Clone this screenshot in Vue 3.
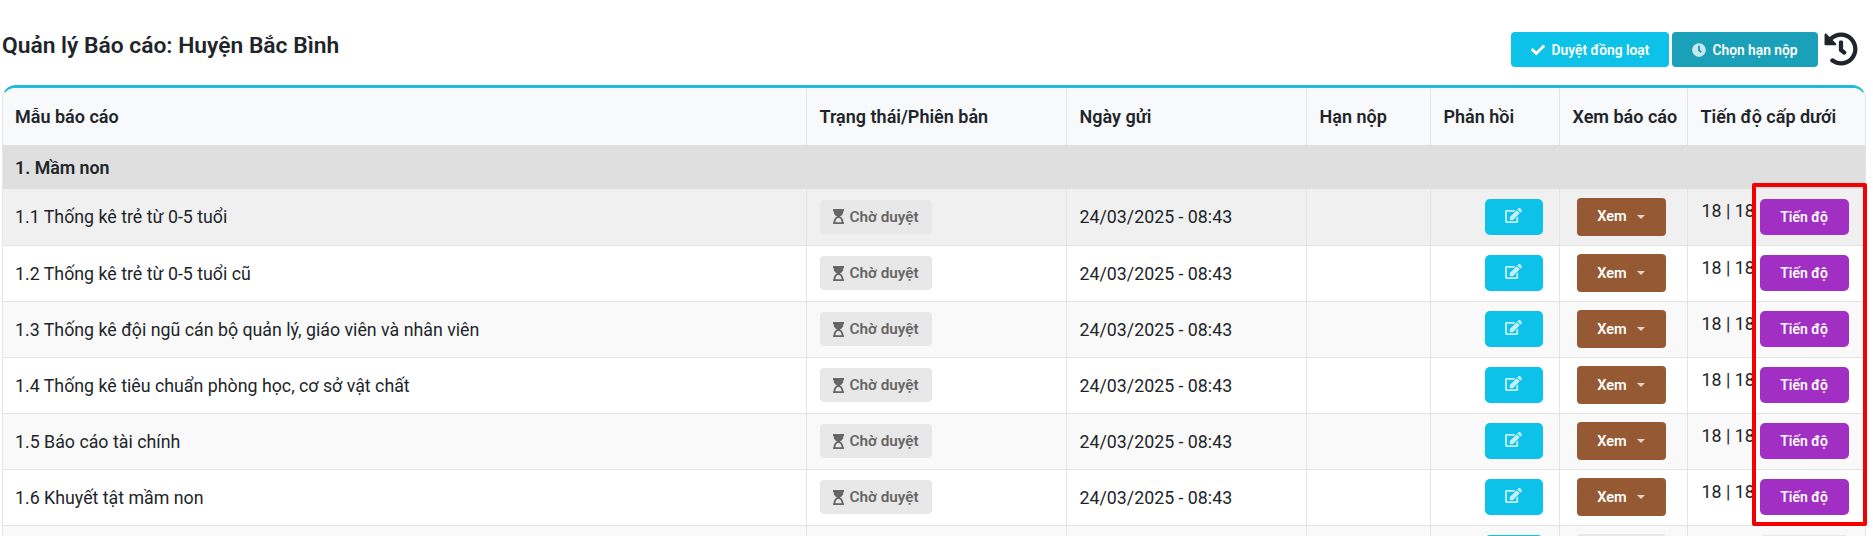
<template>
  <div class="page">
    <div class="top-bar">
      <h2 class="page-title">Quản lý Báo cáo: Huyện Bắc Bình</h2>
      <div class="top-actions">
        <button class="btn btn-approve">
          <svg class="btn-icon check" viewBox="0 0 512 512"><path fill="currentColor" d="M173.9 439.4 7.5 273c-10-10-10-26.200 0-36.200l36.200-36.200c10-10 26.200-10 36.200 0L192 312.700 432.100 72.600c10-10 26.200-10 36.200 0l36.200 36.200c10 10 10 26.200 0 36.200L210.100 439.400c-10 10-26.200 10-36.200 0z"/></svg>
          Duyệt đồng loạt
        </button>
        <button class="btn btn-deadline">
          <svg class="btn-icon clock" viewBox="0 0 512 512"><path fill="currentColor" d="M256 8C119 8 8 119 8 256s111 248 248 248 248-111 248-248S393 8 256 8zm57 350-88-64c-3-2-5-6-5-10V116c0-7 5-12 12-12h48c7 0 12 5 12 12v138l63 46c5 4 7 11 3 17l-28 39c-4 5-11 6-17 2z"/></svg>
          Chọn hạn nộp
        </button>
        <svg class="history" viewBox="0 0 512 512"><path fill="currentColor" d="M504 255.531c.253 136.640-111.180 248.372-247.820 248.468-59.015.042-113.223-20.530-155.822-54.911-11.077-8.940-11.905-25.541-1.839-35.607l11.267-11.267c8.609-8.609 22.353-9.551 31.891-1.984C173.062 425.135 212.781 440 256 440c101.705 0 184-82.311 184-184 0-101.705-82.311-184-184-184-48.814 0-93.149 18.969-126.068 49.932l50.754 50.754c10.080 10.080 2.941 27.314-11.313 27.314H24c-8.837 0-16-7.163-16-16V38.627c0-14.254 17.234-21.393 27.314-11.314l49.372 49.372C129.209 34.136 189.552 8 256 8c136.810 0 247.747 110.780 248 247.531zm-180.912 78.784l9.823-12.630c8.138-10.463 6.253-25.542-4.210-33.679L288 256.349V152c0-13.255-10.745-24-24-24h-16c-13.255 0-24 10.745-24 24v135.651l65.409 50.874c10.463 8.137 25.541 6.253 33.679-4.210z"/></svg>
      </div>
    </div>

    <div class="table-card">
      <table class="report-table">
        <colgroup>
          <col v-for="w in colWidths" :key="w.name" :style="{ width: w.px + 'px' }" />
        </colgroup>
        <thead>
          <tr>
            <th v-for="w in colWidths" :key="w.name">{{ w.name }}</th>
          </tr>
        </thead>
        <tbody>
          <tr class="group-row">
            <td colspan="7">1. Mầm non</td>
          </tr>
          <tr v-for="(r, i) in rows" :key="r" :class="['data-row', rowClass(i)]">
            <td>{{ r }}</td>
            <td>
              <span class="badge">
                <svg class="hourglass" viewBox="0 0 384 512"><path fill="currentColor" d="M360 0H24C11 0 0 11 0 24v16c0 13 11 24 24 24 0 91 51 167 121 192-70 25-121 101-121 192-13 0-24 11-24 24v16c0 13 11 24 24 24h336c13 0 24-11 24-24v-16c0-13-11-24-24-24 0-91-51-167-121-192 70-25 121-101 121-192 13 0 24-11 24-24V24c0-13-11-24-24-24zM296 448H88c0-30 6-58 18-82 20-39 51-62 86-62s66 23 86 62c12 24 18 52 18 82z"/></svg>
                Chờ duyệt
              </span>
            </td>
            <td>24/03/2025 - 08:43</td>
            <td></td>
            <td class="cell-edit">
              <button class="btn-edit">
                <svg viewBox="0 0 576 512"><path fill="currentColor" d="m402.600 83.200 90.200 90.200c3.800 3.800 3.800 10 0 13.800L274.400 405.600l-92.800 10.300c-12.400 1.400-22.900-9.100-21.500-21.500l10.300-92.800L388.800 83.200c3.800-3.800 10-3.800 13.800 0zm162-22.900-48.800-48.800c-15.200-15.200-39.900-15.200-55.200 0l-35.400 35.400c-3.800 3.800-3.800 10 0 13.800l90.200 90.200c3.800 3.800 10 3.800 13.800 0l35.400-35.400c15.200-15.300 15.200-40 0-55.200zM384 346.200V448H64V128h229.800c3.200 0 6.200-1.300 8.500-3.500l40-40c7.600-7.600 2.200-20.500-8.500-20.500H48C21.500 64 0 85.500 0 112v352c0 26.500 21.500 48 48 48h352c26.500 0 48-21.500 48-48V306.200c0-10.700-12.900-16-20.500-8.500l-40 40c-2.200 2.300-3.500 5.300-3.500 8.500z"/></svg>
              </button>
            </td>
            <td class="cell-view">
              <button class="btn-view">Xem<span class="caret"></span></button>
            </td>
            <td class="cell-progress">
              <span class="progress-count">18 | 18</span>
              <button class="btn-progress">Tiến độ</button>
            </td>
          </tr>
          <!-- dòng cuối bị cắt ở mép ảnh, chỉ còn thấy đỉnh các nút -->
          <tr class="data-row row-odd cut-row">
            <td></td>
            <td></td>
            <td></td>
            <td></td>
            <td class="cell-edit"><button class="btn-edit"></button></td>
            <td class="cell-view"><button class="btn-view btn-off"></button></td>
            <td class="cell-progress">
              <span class="progress-count"></span>
              <button class="btn-progress btn-off"></button>
            </td>
          </tr>
        </tbody>
      </table>
    </div>

    <!-- khung đỏ đánh dấu trên ảnh chụp -->
    <div class="highlight"></div>
  </div>
</template>

<script setup>
const colWidths = [
  { name: "Mẫu báo cáo", px: 803 },
  { name: "Trạng thái/Phiên bản", px: 260 },
  { name: "Ngày gửi", px: 240 },
  { name: "Hạn nộp", px: 124 },
  { name: "Phản hồi", px: 129 },
  { name: "Xem báo cáo", px: 128 },
  { name: "Tiến độ cấp dưới", px: 178 },
];

const rows = [
  "1.1 Thống kê trẻ từ 0-5 tuổi",
  "1.2 Thống kê trẻ từ 0-5 tuổi cũ",
  "1.3 Thống kê đội ngũ cán bộ quản lý, giáo viên và nhân viên",
  "1.4 Thống kê tiêu chuẩn phòng học, cơ sở vật chất",
  "1.5 Báo cáo tài chính",
  "1.6 Khuyết tật mầm non",
];

// dòng đầu đang hover nên đậm hơn
const rowClass = (i) => {
  if (i === 0) return "row-hover";
  return i % 2 === 0 ? "row-odd" : "row-even";
};
</script>

<style scoped>
.page {
  position: relative;
  width: 1873px;
  height: 536px;
  overflow: hidden;
  background: #fff;
  font-family: Roboto, "Noto Sans", sans-serif;
  color: #212529;
}

.top-bar {
  display: flex;
  justify-content: space-between;
  align-items: flex-start;
  height: 85px;
  padding: 32px 15px 0 2px;
  box-sizing: border-box;
}

.page-title {
  margin: 1px 0 0;
  font-size: 22.800px;
  font-weight: 600;
  line-height: 26px;
}

.top-actions {
  display: flex;
  align-items: flex-start;
}

.btn {
  display: flex;
  align-items: center;
  justify-content: center;
  height: 35px;
  border: none;
  border-radius: 4px;
  color: #fff;
  font-family: inherit;
  font-size: 13.800px;
  font-weight: 600;
  padding: 0;
}

.btn-approve {
  width: 158px;
  background: #0dc2e8;
}

.btn-deadline {
  width: 146px;
  margin-left: 3px;
  background: #1aa0b9;
}

.btn-icon {
  width: 14px;
  height: 14px;
  margin-right: 6px;
}

.check {
  margin-right: 7px;
}

.clock {
  color: #c9e8ef;
}

.history {
  width: 34px;
  height: 34px;
  margin-left: 6px;
  color: #212529;
}

.table-card {
  margin-left: 2px;
  width: 1864px;
  border: 1px solid #e3e6e8;
  border-top: 3px solid #22bcd8;
  border-radius: 14px 14px 0 0;
  border-bottom: none;
  box-sizing: border-box;
  overflow: hidden;
}

.report-table {
  width: 100%;
  table-layout: fixed;
  border-collapse: collapse;
  font-size: 17.800px;
}

th {
  height: 57px;
  padding: 0 13px;
  background: #f8f9fb;
  border-right: 1px solid #e3e3e3;
  text-align: left;
  font-size: 18px;
  font-weight: 600;
  white-space: nowrap;
}

th:first-child {
  padding-left: 12px;
}

th:last-child,
td:last-child {
  border-right: none;
}

.group-row td {
  height: 44px;
  padding: 0 13px 0 12px;
  background: #dfdfdf;
  font-weight: 600;
}

.data-row td {
  height: 56px;
  box-sizing: border-box;
  padding: 0 13px;
  border-right: 1px solid #e3e3e3;
  border-bottom: 1px solid #e3e3e3;
}

.data-row td:first-child {
  padding-left: 12px;
}

.row-hover td {
  background: #f0f0f0;
}

.row-odd td {
  background: #f9f9f9;
}

.row-even td {
  background: #fff;
}

.badge {
  display: inline-flex;
  align-items: center;
  width: 112px;
  height: 34px;
  box-sizing: border-box;
  padding-left: 12px;
  border-radius: 4px;
  background: #e8e8e8;
  color: #666;
  font-size: 15.300px;
  font-weight: 600;
  white-space: nowrap;
  vertical-align: middle;
}

.hourglass {
  width: 13px;
  height: 15px;
  margin-right: 5px;
}

.cell-edit {
  text-align: right;
}

.data-row .cell-edit {
  padding-right: 16px;
}

.btn-edit {
  width: 58px;
  height: 36px;
  padding: 0;
  border: none;
  border-radius: 5px;
  background: #0dc2e8;
  color: #c4f0fa;
  vertical-align: middle;
}

.btn-edit svg {
  width: 17px;
  height: 15px;
  display: block;
  margin: -3px auto 0;
}

.data-row .cell-view {
  padding-left: 17px;
}

.btn-view {
  display: flex;
  align-items: center;
  justify-content: center;
  width: 89px;
  height: 38px;
  padding: 0;
  border: none;
  border-radius: 4px;
  background: #955a34;
  color: #fff;
  font-family: inherit;
  font-size: 14.500px;
  font-weight: 600;
}

.caret {
  margin-left: 10px;
  border-top: 4px solid #e5d5cb;
  border-left: 4px solid transparent;
  border-right: 4px solid transparent;
}

.data-row .cell-progress {
  padding-left: 14px;
  padding-right: 0;
  white-space: nowrap;
}

.progress-count {
  display: inline-block;
  width: 58px;
  overflow: hidden;
}

.btn-progress {
  width: 89px;
  height: 36px;
  padding: 0;
  border: none;
  border-radius: 5px;
  background: #a22fc4;
  color: #fff;
  font-family: inherit;
  font-size: 14px;
  font-weight: 600;
  vertical-align: middle;
}

.btn-off {
  background: #e8e8e8;
}

.highlight {
  position: absolute;
  left: 1752px;
  top: 183px;
  width: 115px;
  height: 343px;
  box-sizing: border-box;
  border: 4px solid #f50000;
  border-radius: 2px;
}
</style>

<style>
body {
  overflow: hidden;
}
</style>
